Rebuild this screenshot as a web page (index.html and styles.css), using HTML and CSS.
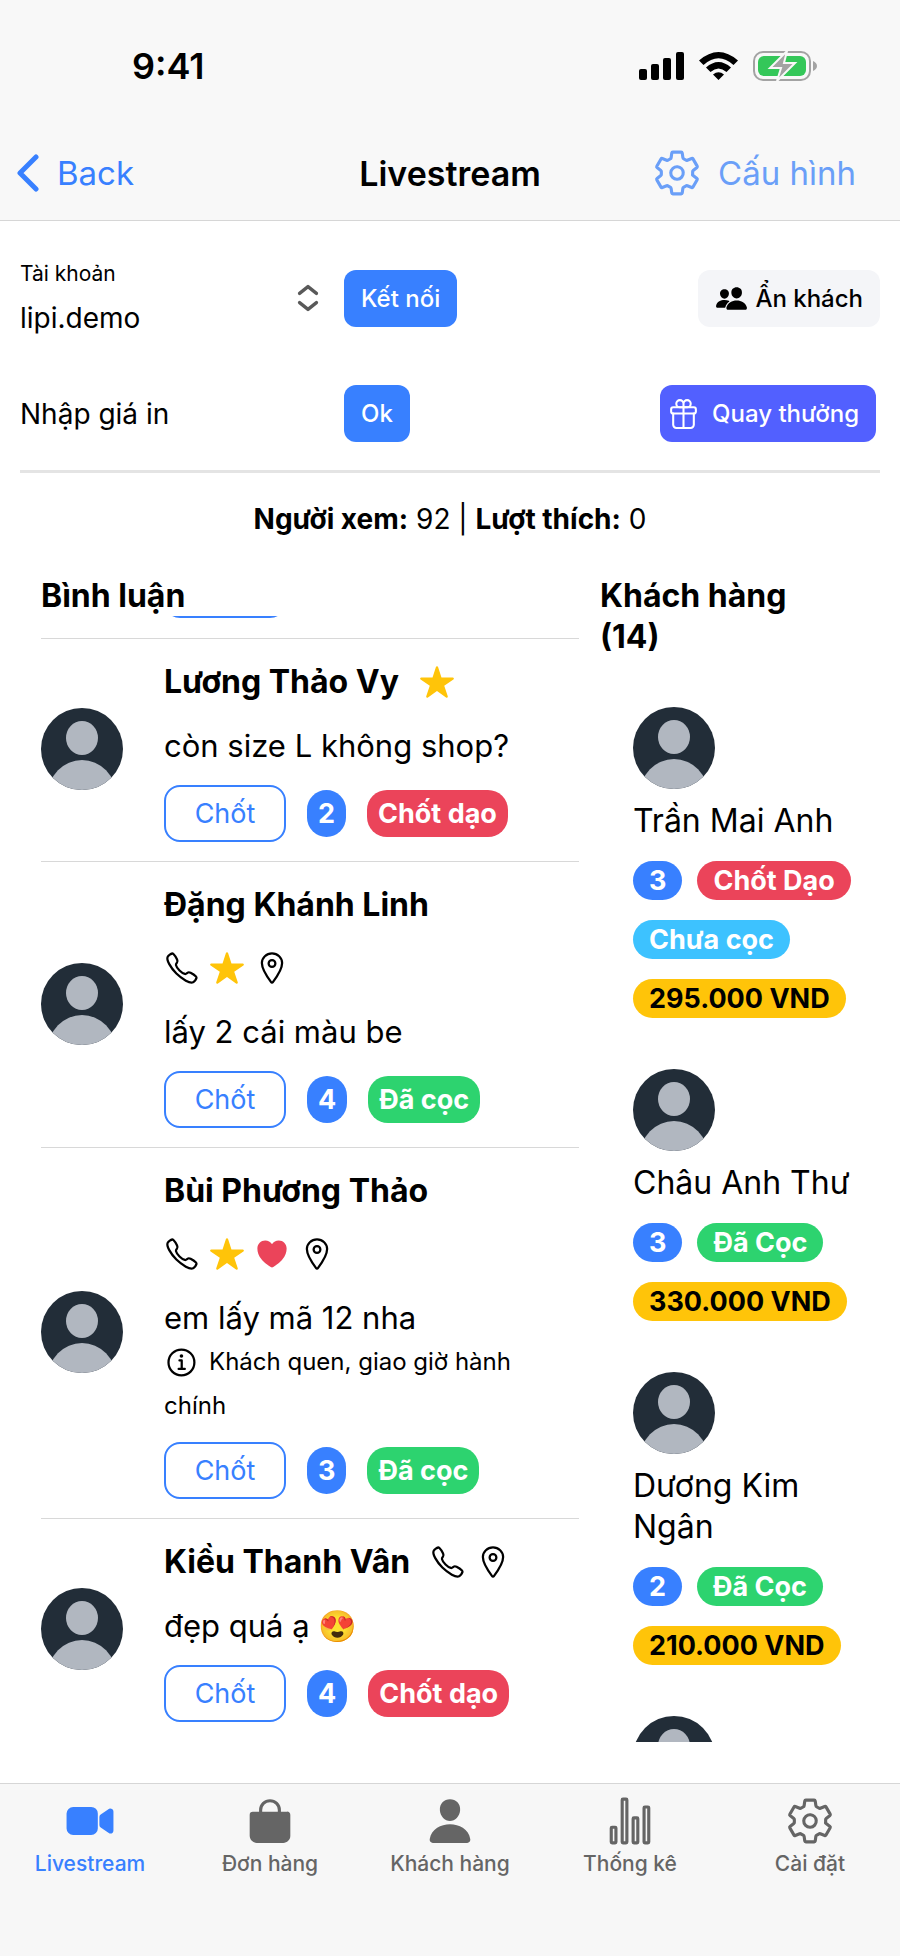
FILE: index.html
```html
<!DOCTYPE html>
<html lang="vi">
<head>
<meta charset="utf-8">
<meta name="viewport" content="width=device-width, initial-scale=1">
<title>Livestream</title>
<link rel="stylesheet" href="styles.css">
</head>
<body>
<svg class="sprite" aria-hidden="true">
  <symbol id="gear" viewBox="0 0 512 512"><path class="line" d="M262.29 192.31a64 64 0 1057.4 57.4 64.13 64.13 0 00-57.4-57.4zM416.39 256a154.34 154.34 0 01-1.53 20.79l45.21 35.46a10.81 10.81 0 012.45 13.75l-42.77 74a10.81 10.81 0 01-13.14 4.59l-44.9-18.08a16.11 16.11 0 00-15.17 1.75A164.48 164.48 0 01325 400.8a15.94 15.94 0 00-8.82 12.14l-6.73 47.89a11.08 11.08 0 01-10.68 9.17h-85.54a11.11 11.11 0 01-10.69-8.87l-6.72-47.82a16.07 16.07 0 00-9-12.22 155.3 155.3 0 01-21.46-12.57 16 16 0 00-15.11-1.71l-44.89 18.07a10.81 10.81 0 01-13.14-4.58l-42.77-74a10.8 10.8 0 012.45-13.75l38.21-30a16.05 16.05 0 006-14.08c-.36-4.17-.58-8.33-.58-12.5s.21-8.27.58-12.35a16 16 0 00-6.07-13.94l-38.19-30A10.81 10.81 0 0149.48 186l42.77-74a10.81 10.81 0 0113.14-4.59l44.9 18.08a16.11 16.11 0 0015.17-1.75A164.48 164.48 0 01187 111.2a15.94 15.94 0 008.82-12.14l6.73-47.89A11.08 11.08 0 01213.23 42h85.54a11.11 11.11 0 0110.69 8.87l6.72 47.82a16.07 16.07 0 009 12.22 155.3 155.3 0 0121.46 12.57 16 16 0 0015.11 1.71l44.89-18.07a10.81 10.81 0 0113.14 4.58l42.77 74a10.8 10.8 0 01-2.45 13.75l-38.21 30a16.05 16.05 0 00-6.05 14.08c.33 4.14.55 8.3.55 12.47z"/></symbol>
  <symbol id="phone" viewBox="0 0 512 512"><path class="line" d="M451 374c-15.88-16-54.34-39.35-73-48.76-24.3-12.24-26.3-13.24-45.4.95-12.74 9.47-21.21 17.93-36.12 14.75s-47.31-21.11-75.68-49.39-47.34-61.62-50.53-76.48 5.41-23.23 14.79-36c13.22-18 12.22-21 .92-45.3-8.81-18.9-32.84-57-48.9-72.8C119.9 44 119.9 47 108.83 51.6A160.15 160.15 0 0083 65.37C67 76 58.12 84.83 51.91 98.1s-9 44.38 23.07 102.64 54.57 88.05 101.14 134.49S258.5 406.64 310.85 436c64.76 36.27 89.6 29.2 102.91 23s22.18-15 32.83-31a159.09 159.09 0 0013.8-25.8C465 391.17 468 391.17 451 374z"/></symbol>
  <symbol id="pin" viewBox="0 0 512 512"><path class="line" d="M256 48c-79.5 0-144 61.39-144 137 0 87 96 224.87 131.25 272.49a15.77 15.77 0 0025.5 0C304 409.89 400 272.07 400 185c0-75.61-64.5-137-144-137z"/><circle class="line" cx="256" cy="192" r="48"/></symbol>
  <symbol id="star" viewBox="0 0 512 512"><path d="M394 480a16 16 0 01-9.39-3L256 383.76 127.39 477a16 16 0 01-24.55-18.08L153 310.35 23 221.2a16 16 0 019-29.2h160.38l48.4-148.95a16 16 0 0130.44 0l48.4 149H480a16 16 0 019.05 29.2L359 310.35l50.13 148.53A16 16 0 01394 480z"/></symbol>
  <symbol id="heart" viewBox="0 0 512 512"><path d="M256 448a32 32 0 01-18-5.57c-78.59-53.35-112.62-89.93-131.39-112.8-40-48.75-59.15-98.8-58.61-153C48.63 114.52 98.46 64 159.08 64c44.08 0 74.61 24.83 92.39 45.51a6 6 0 009.06 0C278.31 88.81 308.84 64 352.92 64c60.62 0 110.45 50.52 111.08 112.64.54 54.21-18.63 104.26-58.61 153-18.77 22.87-52.8 59.45-131.39 112.8A32 32 0 01256 448z"/></symbol>
  <symbol id="info" viewBox="0 0 512 512"><path class="line" d="M248 64C146.39 64 64 146.39 64 248s82.39 184 184 184 184-82.39 184-184S349.61 64 248 64zM220 220h32v116M208 340h88"/><circle cx="248" cy="156" r="26"/></symbol>
  <symbol id="people" viewBox="0 0 512 512"><path d="M336 256c-20.56 0-40.44-9.18-56-25.84-15.13-16.25-24.37-37.92-26-61-1.74-24.62 5.77-47.26 21.14-63.76S312 80 336 80c23.83 0 45.38 9.06 60.7 25.52 15.47 16.62 23 39.22 21.26 63.63-1.67 23.11-10.9 44.77-26 61C376.44 246.82 356.57 256 336 256zM467.83 432H204.18a27.71 27.71 0 01-22-10.67 30.22 30.22 0 01-5.26-25.79c8.42-33.81 29.28-61.85 60.32-81.08C264.79 297.4 299.86 288 336 288c36.85 0 71 9 98.71 26.05 31.11 19.13 52 47.33 60.38 81.55a30.27 30.27 0 01-5.32 25.78A27.68 27.68 0 01467.83 432zM147 260c-35.19 0-66.13-32.72-69-72.93-1.42-20.6 5-39.65 18-53.62 12.86-13.83 31-21.45 51-21.45s38 7.66 50.93 21.57c13.1 14.08 19.5 33.09 18 53.52-2.87 40.2-33.8 72.91-68.93 72.91zM212.66 291.45c-17.59-8.6-40.42-12.9-65.65-12.9-29.46 0-58.07 7.68-80.57 21.62-25.51 15.83-42.67 38.88-49.6 66.71a27.39 27.39 0 004.79 23.36A25.32 25.32 0 0041.72 400h111a8 8 0 007.87-6.57c.11-.63.25-1.26.41-1.88 8.48-34.06 28.35-62.84 57.71-83.82a8 8 0 00-.63-13.39c-1.57-.92-3.37-1.89-5.42-2.89z"/></symbol>
  <symbol id="gift" viewBox="0 0 512 512"><path class="line" d="M256 104v56h56a56 56 0 10-56-56zM256 104v56h-56a56 56 0 1156-56zM416 256v176a48 48 0 01-48 48H144a48 48 0 01-48-48V256M256 160v320"/><rect class="line" x="64" y="160" width="384" height="96" rx="32"/></symbol>
  <symbol id="expand" viewBox="0 0 512 512"><path class="line heavy" d="M136 190L256 94l120 96M136 322l120 96 120-96"/></symbol>
  <symbol id="video" viewBox="0 0 512 512"><path d="M464 384.39a32 32 0 01-13-2.77 15.77 15.77 0 01-2.71-1.54l-82.71-58.22A32 32 0 01352 295.7v-79.4a32 32 0 0113.58-26.16l82.71-58.22a15.77 15.77 0 012.71-1.54 32 32 0 0145 29.24v192.76a32 32 0 01-32 32zM268 400H84a68.07 68.07 0 01-68-68V180a68.07 68.07 0 0168-68h184.48A67.6 67.6 0 01336 179.52V332a68.07 68.07 0 01-68 68z"/></symbol>
  <symbol id="bag" viewBox="0 0 512 512"><path d="M454.65 169.4A31.82 31.82 0 00432 160h-64v-16a112 112 0 00-224 0v16H80a32 32 0 00-32 32v216c0 39 33 72 72 72h272c39 0 72-31.65 72-70.56V192a31.79 31.79 0 00-9.35-22.6zM176 144a80 80 0 01160 0v16H176z"/></symbol>
  <symbol id="person" viewBox="0 0 512 512"><path d="M332.64 64.58C313.18 43.57 286 32 256 32c-30.16 0-57.43 11.5-76.8 32.38-19.58 21.11-29.12 49.8-26.88 80.78C156.76 206.28 203.27 256 256 256s99.16-49.71 103.67-110.82c2.27-30.7-7.33-59.33-27.03-80.6zM432 480H80a31 31 0 01-24.2-11.13c-6.5-7.77-9.12-18.38-7.18-29.11C57.06 392.94 83.4 353.61 124.8 326c36.78-24.51 83.37-38 131.2-38s94.42 13.5 131.2 38c41.4 27.6 67.74 66.93 76.18 113.75 1.94 10.73-.68 21.34-7.18 29.11A31 31 0 01432 480z"/></symbol>
  <symbol id="stats" viewBox="0 0 512 512"><g class="line"><rect x="64" y="320" width="48" height="160" rx="8"/><rect x="288" y="224" width="48" height="256" rx="8"/><rect x="400" y="112" width="48" height="368" rx="8"/><rect x="176" y="32" width="48" height="448" rx="8"/></g></symbol>
  <symbol id="avatar" viewBox="0 0 82 82"><clipPath id="disc"><circle cx="41" cy="41" r="41"/></clipPath><g clip-path="url(#disc)"><rect width="82" height="82" fill="#222d38"/><ellipse cx="41" cy="30" rx="16" ry="17" fill="#b1b7c0"/><ellipse cx="41" cy="87" rx="34" ry="35" fill="#b1b7c0"/></g></symbol>
</svg>

<div class="app">
  <header class="top">
    <div class="status">
      <time class="clock">9:41</time>
      <div class="signals">
        <svg width="45" height="28" viewBox="0 0 45 28"><rect x="0" y="17" width="8" height="11" rx="2"/><rect x="12" y="12" width="8" height="16" rx="2"/><rect x="24" y="6" width="8" height="22" rx="2"/><rect x="37" y="0" width="8" height="28" rx="2"/></svg>
        <svg width="39" height="28" viewBox="0 0 39 28"><path d="M0 8.500Q19.500-8.500 39 8.500L34.500 13Q19.500-0.500 4.500 13ZM7 15.500Q19.500 4.500 32 15.500L27.500 20Q19.500 13 11.500 20ZM14 22.500Q19.500 18 25 22.500L19.500 28Z"/></svg>
        <svg width="64" height="30" viewBox="0 0 64 30"><rect x="1" y="1" width="56" height="28" rx="9" fill="none" stroke="#a3a3a3" stroke-width="2"/><rect x="5" y="5" width="48" height="20" rx="6" fill="#34c759"/><path d="M60 10q4 2 4 5t-4 5z" fill="#a3a3a3"/><path d="M34 0L17 17h11l-4 13L42 12H31z" fill="#a3a3a3" stroke="#f8f8f8" stroke-width="2"/></svg>
      </div>
    </div>
    <nav class="bar">
      <a class="back" href="#back"><svg width="23" height="38" viewBox="0 0 23 38"><path d="M19 3L3 19l16 16" fill="none" stroke="currentColor" stroke-width="5" stroke-linecap="round" stroke-linejoin="round"/></svg>Back</a>
      <h1 class="title">Livestream</h1>
      <a class="config" href="#config"><svg class="i50"><use href="#gear"/></svg>Cấu hình</a>
    </nav>
  </header>

  <main class="main">
    <form class="controls">
      <div class="field">
        <div class="stack">
          <label class="label" for="account">Tài khoản</label>
          <select class="account" id="account"><option>lipi.demo</option></select>
        </div>
        <svg class="i36 expand"><use href="#expand"/></svg>
      </div>
      <button class="btn blue" type="button">Kết nối</button>
      <button class="btn light" type="button"><svg class="i33"><use href="#people"/></svg>Ẩn khách</button>
      <input class="price" type="text" aria-label="Nhập giá in" placeholder="Nhập giá in">
      <button class="btn blue" type="button">Ok</button>
      <button class="btn violet" type="button"><svg class="i33"><use href="#gift"/></svg>Quay thưởng</button>
    </form>
    <p class="totals"><b>Người xem:</b> 92 | <b>Lượt thích:</b> 0</p>

    <div class="columns">
      <section class="comments">
        <h2 class="heading">Bình luận</h2>
        <div class="feed">
          <div class="scrolled"><span class="edge"></span></div>
          <article class="item">
            <svg class="avatar"><use href="#avatar"/></svg>
            <div class="body">
              <div class="who"><h3 class="name">Lương Thảo Vy</h3><div class="marks"><svg class="i36 gold"><use href="#star"/></svg></div></div>
              <p class="text">còn size L không shop?</p>
              <div class="actions"><button class="close" type="button">Chốt</button><span class="tag blue">2</span><span class="tag red">Chốt dạo</span></div>
            </div>
          </article>
          <article class="item">
            <svg class="avatar"><use href="#avatar"/></svg>
            <div class="body">
              <div class="who"><h3 class="name">Đặng Khánh Linh</h3><div class="marks"><svg class="i36"><use href="#phone"/></svg><svg class="i36 gold"><use href="#star"/></svg><svg class="i36"><use href="#pin"/></svg></div></div>
              <p class="text">lấy 2 cái màu be</p>
              <div class="actions"><button class="close" type="button">Chốt</button><span class="tag blue">4</span><span class="tag green">Đã cọc</span></div>
            </div>
          </article>
          <article class="item">
            <svg class="avatar"><use href="#avatar"/></svg>
            <div class="body">
              <div class="who"><h3 class="name">Bùi Phương Thảo</h3><div class="marks"><svg class="i36"><use href="#phone"/></svg><svg class="i36 gold"><use href="#star"/></svg><svg class="i36 rose"><use href="#heart"/></svg><svg class="i36"><use href="#pin"/></svg></div></div>
              <p class="text">em lấy mã 12 nha</p>
              <p class="note"><svg class="i36"><use href="#info"/></svg>Khách quen, giao giờ hành chính</p>
              <div class="actions"><button class="close" type="button">Chốt</button><span class="tag blue">3</span><span class="tag green">Đã cọc</span></div>
            </div>
          </article>
          <article class="item">
            <svg class="avatar"><use href="#avatar"/></svg>
            <div class="body">
              <div class="who"><h3 class="name">Kiều Thanh Vân</h3><div class="marks"><svg class="i36"><use href="#phone"/></svg><svg class="i36"><use href="#pin"/></svg></div></div>
              <p class="text">đẹp quá ạ 😍</p>
              <div class="actions"><button class="close" type="button">Chốt</button><span class="tag blue">4</span><span class="tag red">Chốt dạo</span></div>
            </div>
          </article>
        </div>
      </section>

      <section class="customers">
        <h2 class="heading">Khách hàng (14)</h2>
        <div class="people">
          <article class="customer">
            <svg class="avatar"><use href="#avatar"/></svg>
            <h3 class="client">Trần Mai Anh</h3>
            <div class="pills"><span class="pill blue">3</span><span class="pill red">Chốt Dạo</span><span class="pill sky">Chưa cọc</span><span class="pill amber">295.000 VND</span></div>
          </article>
          <article class="customer">
            <svg class="avatar"><use href="#avatar"/></svg>
            <h3 class="client">Châu Anh Thư</h3>
            <div class="pills"><span class="pill blue">3</span><span class="pill green">Đã Cọc</span><span class="pill amber">330.000 VND</span></div>
          </article>
          <article class="customer">
            <svg class="avatar"><use href="#avatar"/></svg>
            <h3 class="client">Dương Kim Ngân</h3>
            <div class="pills"><span class="pill blue">2</span><span class="pill green">Đã Cọc</span><span class="pill amber">210.000 VND</span></div>
          </article>
          <article class="customer">
            <svg class="avatar"><use href="#avatar"/></svg>
          </article>
        </div>
      </section>
    </div>
  </main>

  <nav class="tabs">
    <a class="tab active" href="#live"><svg class="i50"><use href="#video"/></svg>Livestream</a>
    <a class="tab" href="#orders"><svg class="i50"><use href="#bag"/></svg>Đơn hàng</a>
    <a class="tab" href="#customers"><svg class="i50"><use href="#person"/></svg>Khách hàng</a>
    <a class="tab" href="#stats-page"><svg class="i50"><use href="#stats"/></svg>Thống kê</a>
    <a class="tab" href="#settings"><svg class="i50"><use href="#gear"/></svg>Cài đặt</a>
  </nav>
</div>
</body>
</html>
```

FILE: styles.css
```css
* { box-sizing: border-box; }
body, h1, h2, h3, p { margin: 0; }
body {
  background: #fff;
  color: #000;
  font-family: Inter, "Noto Sans", sans-serif;
}
button, input, select { font: inherit; color: inherit; border: 0; background: none; }
a { text-decoration: none; color: inherit; }
svg { fill: currentColor; flex: none; }
.sprite { position: absolute; width: 0; height: 0; }
.line { fill: none; stroke: currentColor; stroke-width: 32; stroke-linecap: round; stroke-linejoin: round; }
.heavy { stroke-width: 48; }
.i33 { width: 33px; height: 33px; }
.i36 { width: 36px; height: 36px; }
.i50 { width: 50px; height: 50px; }
.avatar { width: 82px; height: 82px; display: block; }
.gold { color: #ffc409; }
.rose { color: #eb445a; }

.app { height: 100vh; display: flex; flex-direction: column; }

/* Status and navigation bars */
.top { background: #f8f8f8; border-bottom: 1px solid #d6d6d6; }
.status {
  height: 124px;
  padding: 8px 83px 0 132px;
  display: flex;
  align-items: center;
  justify-content: space-between;
}
.clock { font-size: 36px; font-weight: 600; }
.signals { display: flex; align-items: center; gap: 15px; }
.bar {
  height: 96px;
  padding: 2px 17px 0;
  display: grid;
  grid-template-columns: 1fr auto 1fr;
  align-items: center;
}
.back, .config { display: flex; align-items: center; font-size: 33px; color: #3880ff; }
.back { gap: 17px; }
.config { gap: 16px; justify-self: end; margin-right: 27px; color: #6a9ff8; }
.title { font-size: 34px; font-weight: 600; }

/* Account and price controls */
.main { flex: 1; min-height: 0; display: flex; flex-direction: column; padding: 33px 20px 41px; }
.controls {
  display: grid;
  grid-template-columns: 324px 1fr auto;
  align-items: center;
  row-gap: 43px;
  padding-bottom: 28px;
  border-bottom: 3px solid #e4e4e4;
}
.controls .btn { justify-self: start; }
.controls .light { justify-self: end; }
.controls .violet { justify-self: end; margin-right: 4px; }
.field { display: flex; align-items: center; justify-content: space-between; padding-right: 18px; }
.stack { flex: 1; display: flex; flex-direction: column; }
.label { font-size: 21px; line-height: 40px; }
.account { appearance: none; padding: 0; font-size: 28px; line-height: 48px; height: 48px; }
.price { padding: 0; width: 100%; font-size: 28px; }
.price::placeholder { color: #000; opacity: 1; }
.expand { color: #595959; }
.btn {
  height: 57px;
  padding: 0 17px;
  border-radius: 12px;
  display: flex;
  align-items: center;
  gap: 7px;
  font-size: 24px;
  font-weight: 500;
}
.light { background: #f4f5f8; }
.violet { background: #5260ff; color: #fff; gap: 12px; padding-left: 7px; }
.blue { background: #3880ff; color: #fff; }
.red { background: #eb445a; color: #fff; }
.green { background: #2dd36f; color: #fff; }
.sky { background: #3dc2ff; color: #fff; }
.amber { background: #ffc409; }

.totals { text-align: center; font-size: 28px; line-height: 41px; padding: 26px 0 35px; }

/* Comment and customer columns */
.columns { flex: 1; min-height: 0; display: flex; }
.heading { font-size: 32px; line-height: 41px; font-weight: 700; }
.comments { flex: 0 0 65%; display: flex; flex-direction: column; padding: 0 0 0 21px; min-width: 0; }
.feed { flex: 1; min-height: 0; overflow: hidden; }
.scrolled { height: 22px; padding: 0 0 20px 123px; overflow: hidden; display: flex; align-items: flex-end; }
.edge { width: 122px; height: 57px; flex: none; border: 2px solid #3880ff; border-radius: 16px; }
.item {
  display: flex;
  align-items: center;
  gap: 41px;
  padding: 11px 0 19px;
  border-top: 1px solid #d8d8d8;
}
.item .avatar { margin-top: 6px; }
.body { flex: 1; min-width: 0; }
.who { display: flex; flex-wrap: wrap; column-gap: 20px; }
.name { font-size: 32px; line-height: 63px; font-weight: 700; }
.marks { display: flex; align-items: center; height: 63px; }
.marks svg { margin-right: 9px; }
.text { margin-top: 12px; font-size: 31px; line-height: 41px; }
.note { margin-top: 2px; font-size: 24px; line-height: 44px; }
.note svg { vertical-align: middle; margin-right: 9px; }
.actions { display: flex; align-items: center; margin-top: 19px; gap: 21px; }
.note + .actions { margin-top: 14px; }
.close {
  width: 122px;
  height: 57px;
  border: 2px solid #3880ff;
  border-radius: 16px;
  color: #3880ff;
  font-size: 27px;
}
.tag { padding: 0 11px; border-radius: 20px; font-size: 27px; line-height: 47px; font-weight: 700; }

.customers { flex: 1; min-width: 0; padding: 0 0 0 21px; display: flex; flex-direction: column; }
.customers .heading { padding-right: 40px; }
.people { flex: 1; min-height: 0; overflow: hidden; padding: 50px 20px 0 33px; }
.customer { margin-bottom: 51px; }
.client { margin: 11px 0 20px; font-size: 32px; line-height: 41px; font-weight: 400; }
.pills { display: flex; flex-wrap: wrap; gap: 20px 15px; }
.pill { padding: 0 16px; border-radius: 20px; font-size: 27px; line-height: 39px; font-weight: 700; white-space: nowrap; }

/* Bottom tabs */
.tabs {
  display: grid;
  grid-template-columns: repeat(5, 1fr);
  height: 173px;
  padding-top: 12px;
  background: #f7f7f7;
  border-top: 1px solid #d6d6d6;
}
.tab { display: flex; flex-direction: column; align-items: center; gap: 6px; font-size: 21px; line-height: 24px; font-weight: 500; color: #656565; }
.active { color: #3880ff; }
```
